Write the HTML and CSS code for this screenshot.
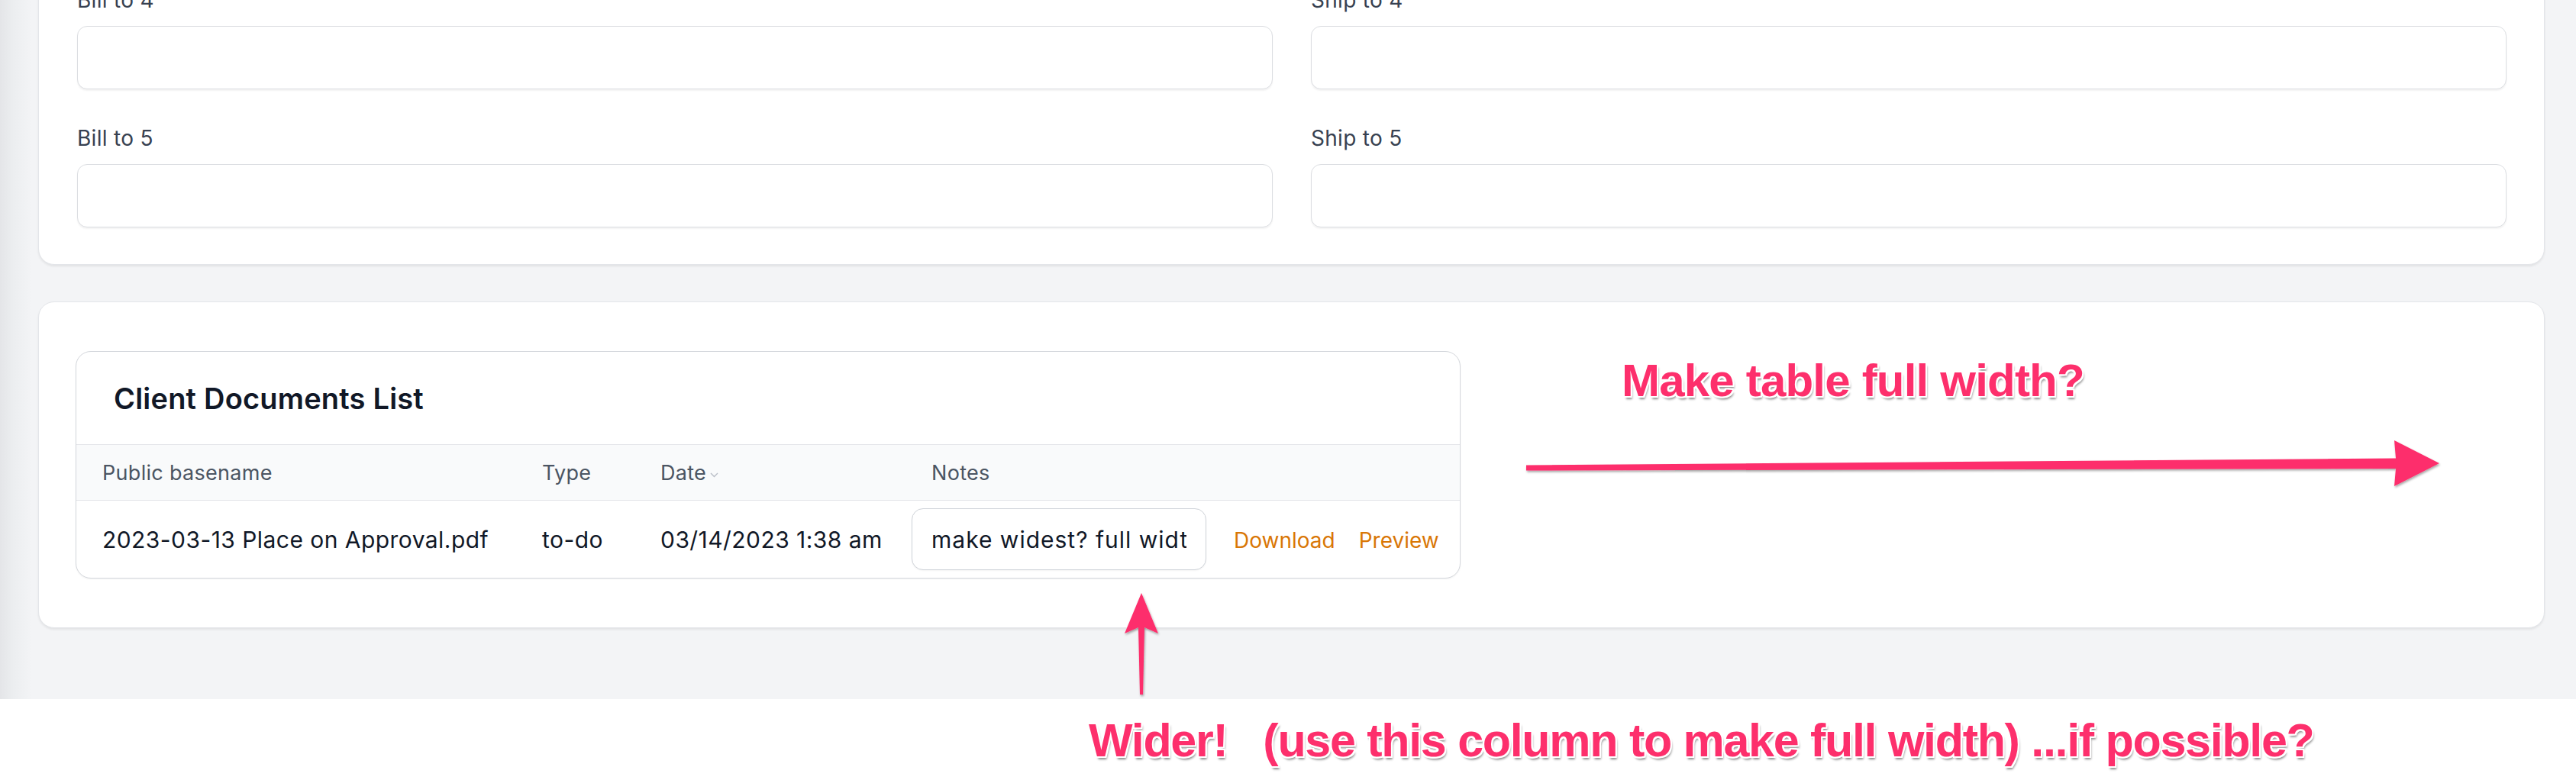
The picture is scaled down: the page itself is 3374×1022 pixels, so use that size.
FILE: index.html
```html
<!DOCTYPE html>
<html lang="en">
<head>
<meta charset="utf-8">
<title>Client Documents</title>
<link rel="stylesheet" href="styles.css">
</head>
<body>
<div class="app">
  <div class="page">
    <section class="card form-card">
      <div class="form-grid">
        <div class="field">
          <label class="field-label">Bill to 4</label>
          <input class="text-input" type="text">
        </div>
        <div class="field">
          <label class="field-label">Ship to 4</label>
          <input class="text-input" type="text">
        </div>
        <div class="field">
          <label class="field-label">Bill to 5</label>
          <input class="text-input" type="text">
        </div>
        <div class="field">
          <label class="field-label">Ship to 5</label>
          <input class="text-input" type="text">
        </div>
      </div>
    </section>

    <section class="card docs-card">
      <div class="table-box">
        <h2 class="table-title">Client Documents List</h2>
        <table class="docs-table">
          <colgroup>
            <col class="c-name"><col class="c-type"><col class="c-date"><col class="c-notes"><col class="c-actions">
          </colgroup>
          <thead>
            <tr>
              <th>Public basename</th>
              <th>Type</th>
              <th>Date<svg class="sort" width="11" height="7" viewBox="0 0 11 7"><path d="M1 1l4.5 4.5L10 1" fill="none" stroke="#b9bec7" stroke-width="1.4"/></svg></th>
              <th>Notes</th>
              <th></th>
            </tr>
          </thead>
          <tbody>
            <tr>
              <td>2023-03-13 Place on Approval.pdf</td>
              <td>to-do</td>
              <td>03/14/2023 1:38 am</td>
              <td class="notes-cell"><input class="notes-input" type="text" value="make widest? full width"></td>
              <td class="actions-cell"><a class="action">Download</a><a class="action preview">Preview</a></td>
            </tr>
          </tbody>
        </table>
      </div>
    </section>
  </div>
</div>

<div class="note note-make">Make table full width?</div>
<div class="note note-wider">Wider!&nbsp;&nbsp;&nbsp;(use this column to make full width) ...if possible?</div>

<svg class="arrows" width="3374" height="1022" viewBox="0 0 3374 1022">
  <defs>
    <filter id="sh" x="-5%" y="-50%" width="110%" height="200%">
      <feDropShadow dx="1" dy="2" stdDeviation="1.5" flood-color="#000" flood-opacity="0.35"/>
    </filter>
  </defs>
  <polygon filter="url(#sh)" fill="#fd2f6c" points="1999,609.5 3138,600.5 3136,577 3195,607 3136,637 3138,614 1999,616.5"/>
  <polygon filter="url(#sh)" fill="#fd2f6c" points="1495,777 1517,830 1499,822 1497,910 1493,910 1491,822 1473,830"/>
</svg>
</body>
</html>
```
FILE: styles.css
```css
* { box-sizing: border-box; }

html, body {
  margin: 0;
  padding: 0;
}

body {
  width: 3374px;
  height: 1022px;
  background: #ffffff;
  overflow: hidden;
  position: relative;
  font-family: Inter, "Noto Sans", sans-serif;
}

.app {
  height: 916px;
  overflow: hidden;
  background: linear-gradient(to right, #e4e5e8 0px, #eceef0 18px, #f3f4f6 42px, #f3f4f6 100%);
}

.page {
  padding: 0 41px 0 50px;
}

.card {
  background: #ffffff;
  border: 1px solid #e3e5e9;
  border-radius: 21px;
  box-shadow: 0 2px 3px rgba(0, 0, 0, 0.07);
}

.form-card {
  margin-top: -71px;
  padding: 50px 49px 48px 50px;
}

.form-grid {
  display: grid;
  grid-template-columns: 1fr 1fr;
  column-gap: 50px;
  row-gap: 44px;
}

.field {
  display: flex;
  flex-direction: column;
}

.field-label {
  display: block;
  height: 40px;
  line-height: 40px;
  font-size: 28px;
  color: #374151;
  margin-bottom: 14px;
  letter-spacing: 0.3px;
}

.text-input {
  height: 83px;
  width: 100%;
  border: 1px solid #dcdee2;
  border-radius: 13px;
  background: #fff;
  box-shadow: 0 2px 2px rgba(0, 0, 0, 0.05);
  outline: none;
}

.docs-card {
  margin-top: 48px;
  padding: 64px 48px;
}

.table-box {
  width: 1814px;
  border: 1px solid #d4d7dc;
  border-radius: 20px;
  overflow: hidden;
  background: #fff;
  box-shadow: 0 1px 2px rgba(0, 0, 0, 0.05);
}

.table-title {
  margin: 0;
  height: 121px;
  display: flex;
  align-items: center;
  padding-left: 49px;
  font-size: 38px;
  font-weight: 600;
  color: #111827;
  letter-spacing: 0.2px;
}

.docs-table {
  width: 100%;
  table-layout: fixed;
  border-collapse: separate;
  border-spacing: 0;
}

.c-name { width: 576px; }
.c-type { width: 155px; }
.c-date { width: 355px; }
.c-notes { width: 402px; }
.c-actions { width: 324px; }

.docs-table th {
  height: 74px;
  padding: 0 0 0 34px;
  text-align: left;
  font-size: 27px;
  font-weight: 400;
  color: #4b5563;
  background: #f9fafb;
  border-top: 1px solid #e3e5e9;
  border-bottom: 1px solid #e3e5e9;
  white-space: nowrap;
  letter-spacing: 0.3px;
}

.sort {
  margin-left: 5px;
  vertical-align: 3px;
}

.docs-table td {
  height: 101px;
  padding: 0 0 0 34px;
  font-size: 30px;
  color: #111827;
  white-space: nowrap;
  vertical-align: middle;
  letter-spacing: 0.45px;
}

.docs-table td.notes-cell {
  padding: 0 8px;
}

.notes-input {
  display: block;
  width: 100%;
  height: 81px;
  padding: 0 25px;
  border: 1px solid #cfd3d9;
  border-radius: 15px;
  font-family: Inter, "Noto Sans", sans-serif;
  font-size: 30px;
  letter-spacing: 1px;
  color: #111827;
  background: #fff;
  box-shadow: 0 1px 2px rgba(0, 0, 0, 0.05);
  outline: none;
}

.docs-table td.actions-cell {
  padding-left: 28px;
  letter-spacing: 0;
}

.action {
  font-size: 28px;
  color: #d97706;
  text-decoration: none;
}

.action.preview {
  margin-left: 31px;
}

.note {
  position: absolute;
  font-family: "Liberation Sans", Arial, sans-serif;
  font-weight: 700;
  line-height: 1;
  color: #fd2f6c;
  white-space: nowrap;
  text-shadow:
    2px 0 0 #fff, -2px 0 0 #fff, 0 2px 0 #fff, 0 -2px 0 #fff,
    2px 2px 0 #fff, -2px 2px 0 #fff, 2px -2px 0 #fff, -2px -2px 0 #fff,
    2px 4px 3px rgba(0, 0, 0, 0.45);
}

.note-make {
  left: 2124px;
  top: 469px;
  font-size: 60px;
  letter-spacing: -0.8px;
}

.note-wider {
  left: 1426px;
  top: 940px;
  font-size: 61px;
  letter-spacing: -1.3px;
}

.arrows {
  position: absolute;
  left: 0;
  top: 0;
  pointer-events: none;
}
```
